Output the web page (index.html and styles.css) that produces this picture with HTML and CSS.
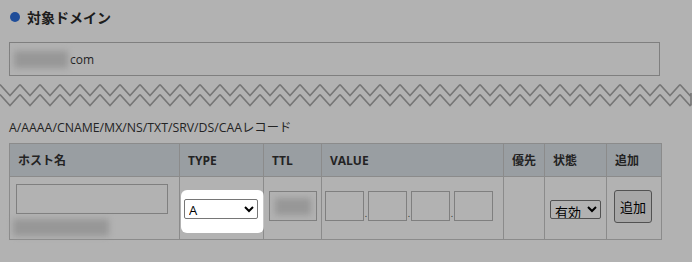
FILE: index.html
```html
<!DOCTYPE html>
<html lang="ja">
<head>
  <meta charset="UTF-8">
  <meta name="viewport" content="width=device-width, initial-scale=1.0">
  <title>DNSレコード追加</title>
  <link rel="stylesheet" href="styles.css">
</head>
<body>
  <div class="page">
    <h2 class="section-title"><span class="dot"></span>対象ドメイン</h2>
    <div class="domain-box"><span class="blur blur-domain"></span>com</div>
  </div>

  <svg class="tear" width="692" height="26" viewBox="0 0 692 26">
    <defs>
      <pattern id="zigzag" width="20" height="26" patternUnits="userSpaceOnUse">
        <path d="M0 2.5 L10 13.5 L20 2.5 M0 12.5 L10 23.5 L20 12.5" fill="none" stroke="#aaa" stroke-width="1.6"/>
      </pattern>
    </defs>
    <rect x="0" y="0" width="691" height="26" fill="url(#zigzag)"/>
    <line x1="691" y1="11" x2="691" y2="23.5" stroke="#aaa" stroke-width="1.6"/>
  </svg>

  <div class="page">
    <p class="record-note">A/AAAA/CNAME/MX/NS/TXT/SRV/DS/CAAレコード</p>

    <table class="record-table">
      <colgroup>
        <col class="col-host">
        <col class="col-type">
        <col class="col-ttl">
        <col class="col-value">
        <col class="col-prio">
        <col class="col-state">
        <col class="col-add">
      </colgroup>
      <thead>
        <tr>
          <th>ホスト名</th>
          <th>TYPE</th>
          <th>TTL</th>
          <th>VALUE</th>
          <th>優先</th>
          <th>状態</th>
          <th>追加</th>
        </tr>
      </thead>
      <tbody>
        <tr>
          <td class="cell-host">
            <input type="text" class="host-input">
            <div class="blur blur-host"></div>
          </td>
          <td class="cell-type">
            <div class="spotlight">
              <select class="type-select">
                <option>A</option>
                <option>AAAA</option>
                <option>CNAME</option>
                <option>MX</option>
                <option>NS</option>
                <option>TXT</option>
              </select>
            </div>
          </td>
          <td class="cell-ttl">
            <div class="ttl-box"><span class="blur blur-ttl"></span></div>
          </td>
          <td class="cell-value">
            <div class="ip-group">
              <input type="text" class="ip-input"><span class="ip-dot">.</span><input type="text" class="ip-input"><span class="ip-dot">.</span><input type="text" class="ip-input"><span class="ip-dot">.</span><input type="text" class="ip-input">
            </div>
          </td>
          <td></td>
          <td class="cell-state">
            <select class="state-select">
              <option>有効</option>
              <option>無効</option>
            </select>
          </td>
          <td class="cell-add">
            <button type="button" class="add-button">追加</button>
          </td>
        </tr>
      </tbody>
    </table>
  </div>
</body>
</html>
```

FILE: styles.css
```css
body {
  margin: 0;
  min-height: 262px;
  background: #fff;
  color: #333;
  font-family: "Open Sans", "Noto Sans CJK JP", sans-serif;
  font-size: 12px;
}

.page {
  padding: 0 9px;
}

.section-title {
  display: flex;
  align-items: center;
  gap: 7px;
  margin: 0;
  padding-top: 6px;
  height: 22px;
  line-height: 22px;
  font-family: "Noto Sans CJK JP", sans-serif;
  font-size: 14px;
  font-weight: bold;
  color: #2a2a2a;
}

.dot {
  width: 10px;
  height: 10px;
  margin-left: 1px;
  border-radius: 50%;
  background: #2d6fdc;
}

.domain-box {
  display: flex;
  align-items: center;
  width: 645px;
  height: 32px;
  margin-top: 14px;
  border: 1px solid #b7b7b7;
  padding-left: 4px;
  box-sizing: content-box;
  font-size: 12px;
  color: #333;
}

.blur {
  display: block;
  background: #d9d9d9;
  filter: blur(3px);
}

.blur-domain {
  width: 54px;
  height: 17px;
  margin-right: 2px;
}

.tear {
  display: block;
  margin-top: 6px;
}

.record-note {
  margin: 11px 0 0;
  line-height: 18px;
  font-size: 12.3px;
  color: #333;
}

.record-table {
  margin-top: 6px;
  width: 652px;
  border-collapse: collapse;
  table-layout: fixed;
}

.col-host { width: 170px; }
.col-type { width: 84px; }
.col-ttl { width: 58px; }
.col-value { width: 182px; }
.col-prio { width: 41px; }
.col-state { width: 62px; }
.col-add { width: 55px; }

.record-table th,
.record-table td {
  border: 1px solid #c8c8c8;
}

.record-table th {
  height: 32px;
  padding: 0 8px;
  background: #dce2e9;
  text-align: left;
  font-weight: bold;
  font-size: 12px;
  color: #333;
}

.record-table td {
  height: 62px;
  padding: 0;
  vertical-align: middle;
}

.cell-host {
  padding-left: 6px !important;
}

.host-input {
  display: block;
  width: 152px;
  height: 30px;
  margin: 4px 0 0;
  border: 1px solid #b7b7b7;
  box-sizing: border-box;
  background: #fff;
}

.blur-host {
  width: 96px;
  height: 17px;
  margin: 5px 0 0 -3px;
}

.cell-type {
  padding-left: 4px !important;
}

.spotlight {
  position: relative;
  width: 74px;
}

.spotlight::before {
  content: "";
  position: absolute;
  top: -9px;
  left: -3px;
  right: -6px;
  bottom: -14px;
  border-radius: 6px;
  box-shadow: 0 0 0 1000px rgba(0, 0, 0, 0.3);
  z-index: 10;
  pointer-events: none;
}

.type-select {
  display: block;
  width: 74px;
  height: 20px;
  margin-top: 2px;
  font-family: "Open Sans", "Noto Sans CJK JP", sans-serif;
  font-size: 13px;
  border: 1px solid #767676;
  border-radius: 2px;
  background: #fff;
  color: #000;
}

.cell-ttl {
  padding-left: 5px !important;
}

.ttl-box {
  display: flex;
  align-items: center;
  justify-content: center;
  width: 48px;
  height: 30px;
  margin-top: -4px;
  border: 1px solid #b7b7b7;
  box-sizing: border-box;
}

.blur-ttl {
  width: 36px;
  height: 17px;
}

.cell-value {
  padding-left: 3px !important;
}

.ip-group {
  display: flex;
  align-items: flex-end;
  margin-top: -4px;
}

.ip-input {
  width: 39px;
  height: 30px;
  margin: 0;
  border: 1px solid #b7b7b7;
  box-sizing: border-box;
  background: #fff;
}

.ip-dot {
  width: 4px;
  text-align: center;
  font-size: 9px;
  line-height: 14px;
}

.cell-state {
  padding-left: 5px !important;
}

.state-select {
  display: block;
  width: 51px;
  height: 19px;
  margin-top: 2px;
  font-family: "Noto Sans CJK JP", sans-serif;
  font-size: 13px;
  border: 1px solid #767676;
  border-radius: 2px;
  background: #fff;
  color: #000;
  padding: 0;
}

.cell-add {
  padding-left: 7px !important;
}

.add-button {
  display: block;
  width: 38px;
  height: 33px;
  margin-top: -4px;
  padding: 0;
  font-family: "Noto Sans CJK JP", sans-serif;
  font-size: 13px;
  color: #000;
  background: #efefef;
  border: 1px solid #767676;
  border-radius: 3px;
}
```
